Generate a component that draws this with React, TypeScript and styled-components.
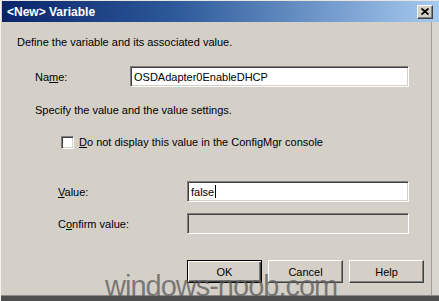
import React from 'react'
import styled, { createGlobalStyle } from 'styled-components'

const GlobalStyle = createGlobalStyle`
  html, body {
    margin: 0;
    padding: 0;
    background: #d4d0c8;
  }
  body {
    font-family: 'Liberation Sans', Arial, sans-serif;
    font-size: 11px;
    color: #000;
  }
`

const Window = styled.div`
  position: relative;
  width: 439px;
  height: 301px;
  box-sizing: border-box;
  display: flex;
  flex-direction: column;
  background: #d4d0c8;
  border-top: 1px solid #e8e6e1;
  border-left: 1px solid #f4f3f0;
  overflow: hidden;
`

const TitleBar = styled.div`
  height: 21px;
  display: flex;
  align-items: center;
  justify-content: space-between;
  padding: 0 6px 0 5px;
  margin-left: 1px;
  background: linear-gradient(to right, #0a246a 0%, #2d5a9a 40%, #a6caf0 100%);
`

const Title = styled.span`
  color: #fff;
  font-weight: bold;
  font-size: 12px;
`

const CloseButton = styled.div`
  width: 16px;
  height: 14px;
  box-sizing: border-box;
  display: flex;
  align-items: center;
  justify-content: center;
  background: #d4d0c8;
  border-top: 1px solid #fff;
  border-left: 1px solid #fff;
  border-right: 1px solid #404040;
  border-bottom: 1px solid #404040;
  box-shadow: inset -1px -1px #808080;
`

const Body = styled.div`
  flex: 1;
  display: flex;
`

const Content = styled.div`
  flex: 1;
  display: flex;
  flex-direction: column;
  padding-left: 16px;
`

const RightEdge = styled.div`
  width: 7px;
  border-left: 1px solid #a09e98;
  background: #d8d5ce;
`

const BottomEdge = styled.div`
  height: 5px;
  background: #4e4e4e;
  border-top: 1px solid #8a8a8a;
`

const Text = styled.div<{ $top: number; $indent?: number }>`
  margin-top: ${({ $top }) => $top}px;
  padding-left: ${({ $indent }) => $indent ?? 0}px;
  line-height: 14px;
  height: 14px;
  white-space: nowrap;
`

const Row = styled.div<{ $top: number; $indent: number }>`
  margin-top: ${({ $top }) => $top}px;
  padding-left: ${({ $indent }) => $indent}px;
  display: flex;
  align-items: center;
  height: 21px;
`

const Label = styled.div<{ $width: number }>`
  width: ${({ $width }) => $width}px;
  white-space: nowrap;
`

const TextBox = styled.div<{ $width: number; $disabled?: boolean }>`
  width: ${({ $width }) => $width}px;
  height: 21px;
  box-sizing: border-box;
  display: flex;
  align-items: center;
  padding-left: 3px;
  background: ${({ $disabled }) => ($disabled ? '#d4d0c8' : '#fff')};
  border-top: 1px solid #808080;
  border-left: 1px solid #808080;
  border-right: 1px solid #fff;
  border-bottom: 1px solid #fff;
  box-shadow: inset 1px 1px #404040, inset -1px -1px #d4d0c8;
  font-size: 11px;
`

const Caret = styled.span`
  display: inline-block;
  width: 1px;
  height: 13px;
  background: #000;
  margin-left: 1px;
`

const CheckRow = styled.div`
  margin-top: 18px;
  padding-left: 44px;
  display: flex;
  align-items: center;
  gap: 5px;
  height: 14px;
`

const CheckBox = styled.div`
  width: 13px;
  height: 13px;
  box-sizing: border-box;
  background: #fff;
  border-top: 1px solid #808080;
  border-left: 1px solid #808080;
  border-right: 1px solid #fff;
  border-bottom: 1px solid #fff;
  box-shadow: inset 1px 1px #404040, inset -1px -1px #d4d0c8;
`

const ButtonRow = styled.div`
  margin-top: 26px;
  padding-left: 170px;
  display: flex;
  gap: 6px;
`

const Button = styled.div<{ $default?: boolean }>`
  width: 75px;
  height: 23px;
  box-sizing: border-box;
  display: flex;
  align-items: center;
  justify-content: center;
  background: #d4d0c8;
  font-size: 11px;
  border: 1px solid;
  border-color: ${({ $default }) => ($default ? '#000' : '#fff #404040 #404040 #fff')};
  box-shadow: ${({ $default }) =>
    $default
      ? 'inset 1px 1px #fff, inset -1px -1px #404040, inset -2px -2px #808080'
      : 'inset -1px -1px #808080'};
`

const Spacer = styled.div`
  flex: 1;
`

const Watermark = styled.div`
  position: absolute;
  left: 104px;
  top: 267px;
  font-family: 'Liberation Sans', Arial, sans-serif;
  font-size: 29px;
  letter-spacing: -1px;
  line-height: 36px;
  color: rgba(95, 95, 95, 0.78);
  pointer-events: none;
`

const U = styled.span`
  text-decoration: underline;
`

const CloseIcon = () => (
  <svg width="8" height="7" viewBox="0 0 8 7">
    <path d="M0.5 0.5 L7.5 6.5 M7.5 0.5 L0.5 6.5" stroke="#000" strokeWidth="1.8" />
  </svg>
)

export default function App() {
  return (
    <>
      <GlobalStyle />
      <Window>
        <TitleBar>
          <Title>&lt;New&gt; Variable</Title>
          <CloseButton>
            <CloseIcon />
          </CloseButton>
        </TitleBar>
        <Body>
          <Content>
            <Text $top={13}>Define the variable and its associated value.</Text>
            <Row $top={17} $indent={18}>
              <Label $width={95}>
                Na<U>m</U>e:
              </Label>
              <TextBox $width={279}>OSDAdapter0EnableDHCP</TextBox>
            </Row>
            <Text $top={16} $indent={18}>
              Specify the value and the value settings.
            </Text>
            <CheckRow>
              <CheckBox />
              <span>
                <U>D</U>o not display this value in the ConfigMgr console
              </span>
            </CheckRow>
            <Row $top={32} $indent={41}>
              <Label $width={129}>
                <U>V</U>alue:
              </Label>
              <TextBox $width={222}>
                false
                <Caret />
              </TextBox>
            </Row>
            <Row $top={11} $indent={41}>
              <Label $width={129}>
                C<U>o</U>nfirm value:
              </Label>
              <TextBox $width={222} $disabled />
            </Row>
            <ButtonRow>
              <Button $default>OK</Button>
              <Button>Cancel</Button>
              <Button>Help</Button>
            </ButtonRow>
            <Spacer />
          </Content>
          <RightEdge />
        </Body>
        <BottomEdge />
        <Watermark>windows-noob.com</Watermark>
      </Window>
    </>
  )
}
